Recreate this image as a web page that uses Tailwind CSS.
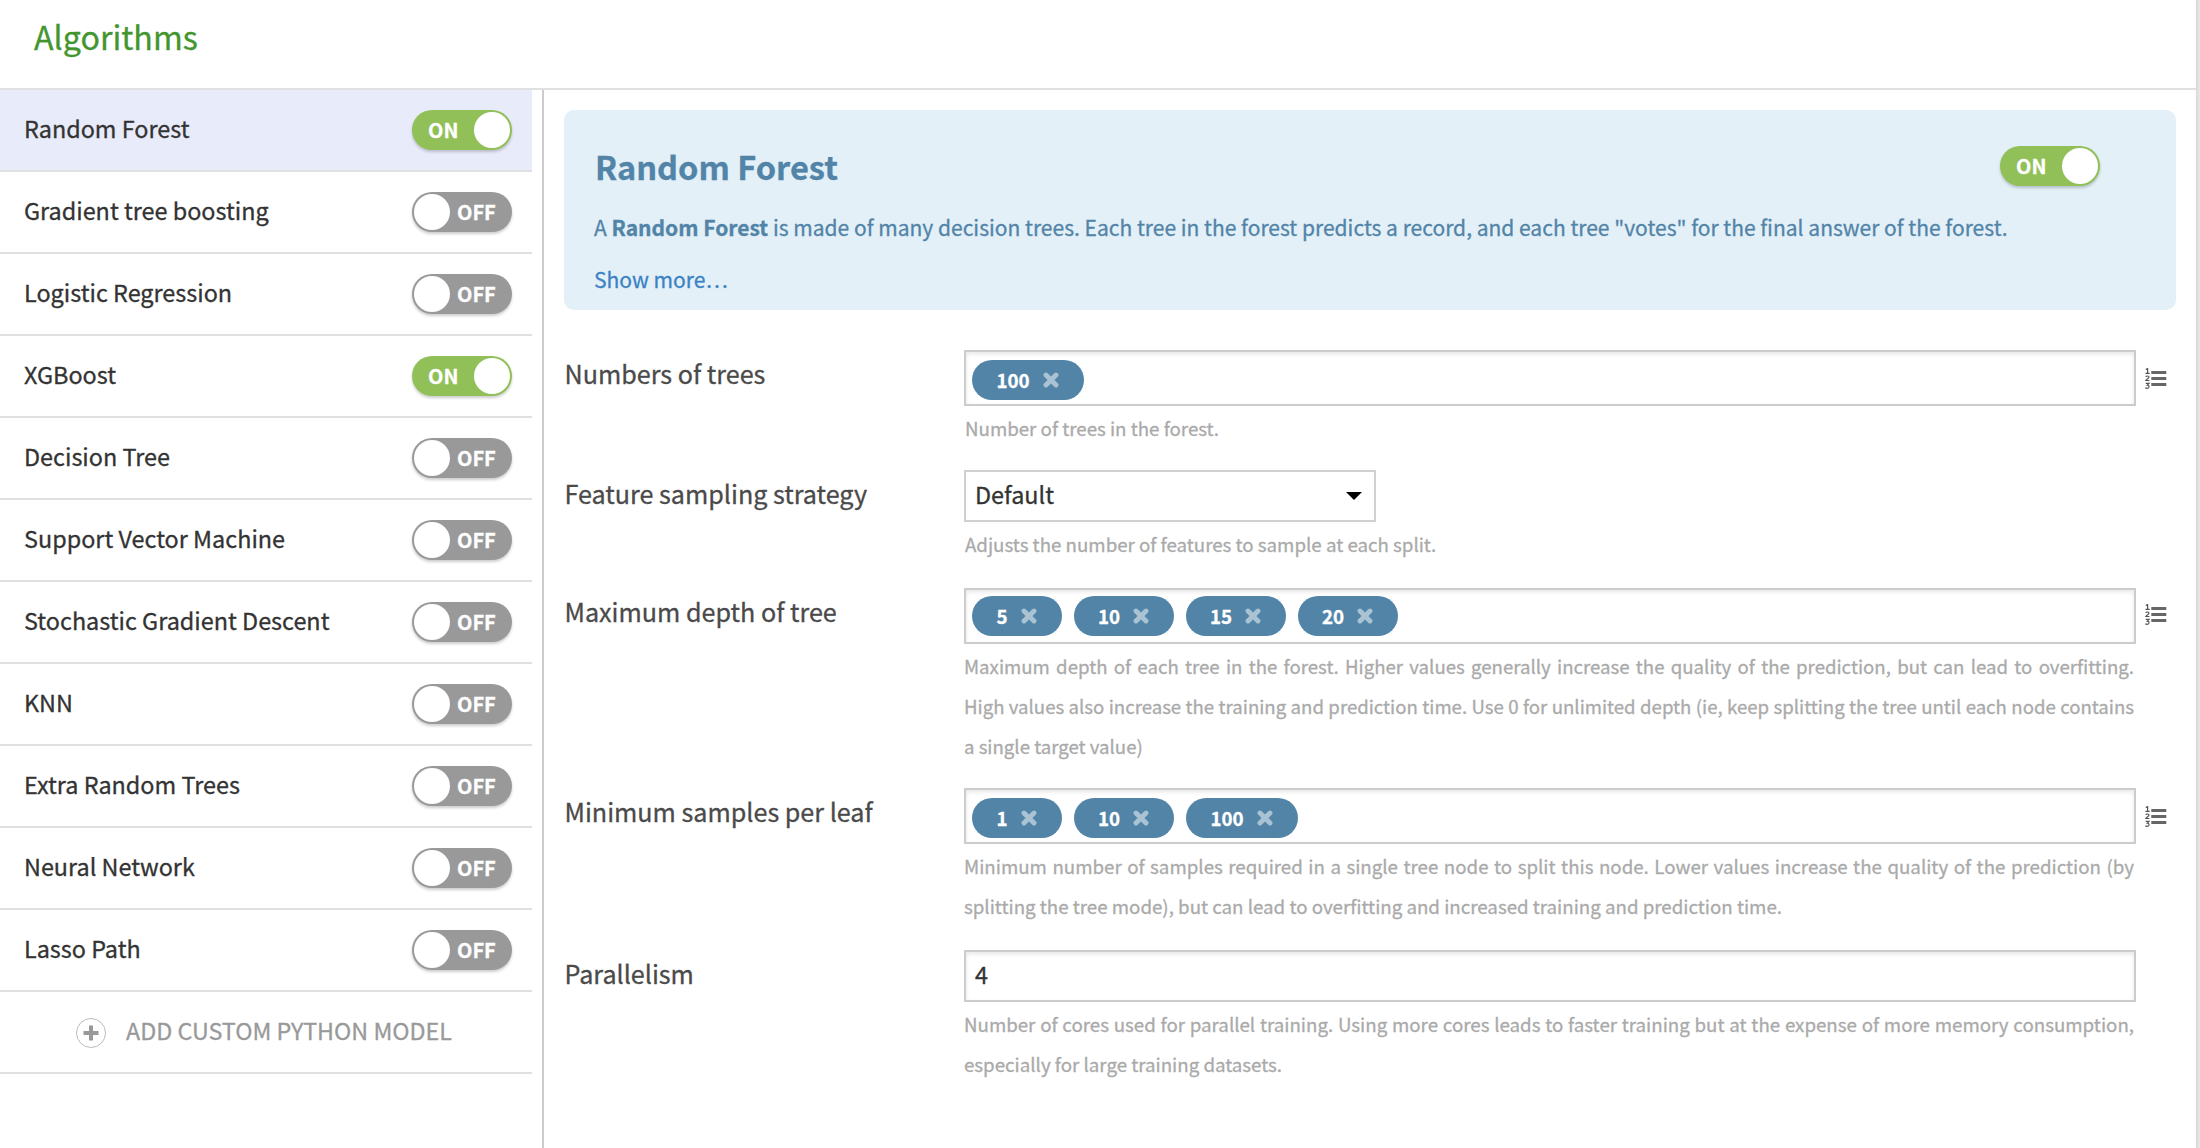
<!DOCTYPE html>
<html lang="en">
<head>
<meta charset="utf-8">
<title>Algorithms</title>
<script src="https://cdn.jsdelivr.net/npm/@tailwindcss/browser@4"></script>
</head>
<body class="flex h-[1148px] w-[2200px] overflow-hidden bg-white font-['Noto_Sans_CJK_SC','Source_Sans_Pro',sans-serif] text-[#333] [-webkit-text-stroke:0.3px]">

<svg class="hidden">
  <symbol id="cross" viewBox="0 0 16 16"><path d="M3 3l10 10M13 3L3 13" fill="none" stroke="currentColor" stroke-width="4.9" stroke-linecap="round"/></symbol>
  <symbol id="list-ol" viewBox="0 0 22 22">
    <path d="M6.3 3h15v3h-15zM6.3 9h15v3h-15zM6.3 15h15v3h-15z" fill="#666"/>
    <path d="M.8 1.500L2.600.6v4.600M.5 5.400h4.200M.8 8.900c.3-1.200 3.200-1.300 3.200.2 0 1.300-2 1.700-3.200 3.400h3.600M.8 15.400h3.200l-1.700 1.800c2.500 0 2.300 3.100-.2 3.100-.8 0-1.300-.2-1.700-.6" fill="none" stroke="#555" stroke-width="1.200"/>
  </symbol>
</svg>

<div class="flex min-w-0 flex-1 flex-col">
  <header class="h-[90px] border-b-2 border-[#e0e0e0] pl-[34px]">
    <h1 class="text-[32.200px] leading-[72px] text-[#43962f]">Algorithms</h1>
  </header>

  <div class="flex flex-1">
    <aside class="w-[532px] shrink-0" id="algorithms"></aside>

    <main class="ml-[10px] flex-1 border-l-2 border-[#ccc] pt-5 pr-5 pl-5">
      <section class="flex h-[200px] justify-between rounded-[10px] bg-[#e3f0f8] pt-9 pr-[76px] pl-[30px] text-[#5284a8]">
        <div class="w-0 whitespace-nowrap">
          <h2 class="pl-px text-[32.600px] leading-[39px] font-bold">Random Forest</h2>
          <p class="mt-[22px] text-[21.030px] leading-10">A <b class="font-bold">Random Forest</b> is made of many decision trees. Each tree in the forest predicts a record, and each tree "votes" for the final answer of the forest.</p>
          <a class="mt-3 block text-[21.050px] leading-10 text-[#3b82c4]">Show more…</a>
        </div>
        <div class="flex h-10 w-[100px] shrink-0 items-center justify-between rounded-full bg-[#91c058] pr-0.5 pl-4 shadow-[0_2px_3px_rgba(0,0,0,0.2)]">
          <span class="text-xl leading-10 font-bold text-white">ON</span><span class="size-9 rounded-full bg-white"></span>
        </div>
      </section>

      <div class="mt-10 grid grid-cols-[400px_1172px_1fr] text-[18.720px] leading-10 text-[#aaa]">
        <label class="pl-[0.5px] text-[25.150px] leading-[46px] text-[#4a4a4a]">Numbers of trees</label>
        <div class="mb-[22px]">
          <div class="flex h-14 items-start gap-3 border-2 border-[#ccc] px-1.5 pt-2 shadow-[inset_0_2px_4px_rgba(0,0,0,0.1)]">
            <span class="flex h-10 w-28 items-center justify-center gap-[13px] rounded-full bg-[#5284a8] pr-px font-bold text-white">100<svg class="size-4 text-white/50"><use href="#cross"/></svg></span>
          </div>
          <p class="mt-0.5 pl-px">Number of trees in the forest.</p>
        </div>
        <svg class="mt-[18px] ml-[9px] size-[22px]"><use href="#list-ol"/></svg>

        <label class="pl-[0.5px] text-[25.150px] leading-[46px] text-[#4a4a4a]">Feature sampling strategy</label>
        <div class="mb-6">
          <div class="flex h-[52px] w-[412px] items-center justify-between border-2 border-[#d0d0d0] pr-3 pl-[9px]">
            <span class="pb-[5px] text-[23.400px] text-[#333]">Default</span>
            <svg class="h-2 w-4" viewBox="0 0 16 8"><path d="M0 0h16L8 8z"/></svg>
          </div>
          <p class="mt-0.5 pl-px">Adjusts the number of features to sample at each split.</p>
        </div>
        <span></span>

        <label class="pl-[0.5px] text-[25.150px] leading-[46px] text-[#4a4a4a]">Maximum depth of tree</label>
        <div class="mb-[22px]">
          <div class="flex h-14 items-start gap-3 border-2 border-[#ccc] px-1.5 pt-1.5 shadow-[inset_0_2px_4px_rgba(0,0,0,0.1)]">
            <span class="flex h-10 w-[90px] items-center justify-center gap-[13px] rounded-full bg-[#5284a8] pr-px font-bold text-white">5<svg class="size-4 text-white/50"><use href="#cross"/></svg></span>
            <span class="flex h-10 w-[100px] items-center justify-center gap-[13px] rounded-full bg-[#5284a8] pr-px font-bold text-white">10<svg class="size-4 text-white/50"><use href="#cross"/></svg></span>
            <span class="flex h-10 w-[100px] items-center justify-center gap-[13px] rounded-full bg-[#5284a8] pr-px font-bold text-white">15<svg class="size-4 text-white/50"><use href="#cross"/></svg></span>
            <span class="flex h-10 w-[100px] items-center justify-center gap-[13px] rounded-full bg-[#5284a8] pr-px font-bold text-white">20<svg class="size-4 text-white/50"><use href="#cross"/></svg></span>
          </div>
          <p class="mt-0.5 pr-0.5 text-[18.640px]">
            <span class="block text-justify [text-align-last:justify]">Maximum depth of each tree in the forest. Higher values generally increase the quality of the prediction, but can lead to overfitting.</span>
            <span class="block text-justify text-[18.600px] whitespace-nowrap [text-align-last:justify]">High values also increase the training and prediction time. Use 0 for unlimited depth (ie, keep splitting the tree until each node contains</span>
            <span class="block">a single target value)</span>
          </p>
        </div>
        <svg class="mt-4 ml-[9px] size-[22px]"><use href="#list-ol"/></svg>

        <label class="pl-[0.5px] text-[25.150px] leading-[46px] text-[#4a4a4a]">Minimum samples per leaf</label>
        <div class="mb-6">
          <div class="flex h-14 items-start gap-3 border-2 border-[#ccc] px-1.5 pt-2 shadow-[inset_0_2px_4px_rgba(0,0,0,0.1)]">
            <span class="flex h-10 w-[90px] items-center justify-center gap-[13px] rounded-full bg-[#5284a8] pr-px font-bold text-white">1<svg class="size-4 text-white/50"><use href="#cross"/></svg></span>
            <span class="flex h-10 w-[100px] items-center justify-center gap-[13px] rounded-full bg-[#5284a8] pr-px font-bold text-white">10<svg class="size-4 text-white/50"><use href="#cross"/></svg></span>
            <span class="flex h-10 w-28 items-center justify-center gap-[13px] rounded-full bg-[#5284a8] pr-px font-bold text-white">100<svg class="size-4 text-white/50"><use href="#cross"/></svg></span>
          </div>
          <p class="mt-0.5 pr-0.5 text-justify">Minimum number of samples required in a single tree node to split this node. Lower values increase the quality of the prediction (by splitting the tree mode), but can lead to overfitting and increased training and prediction time.</p>
        </div>
        <svg class="mt-[18px] ml-[9px] size-[22px]"><use href="#list-ol"/></svg>

        <label class="pl-[0.5px] text-[25.150px] leading-[46px] text-[#4a4a4a]">Parallelism</label>
        <div>
          <div class="flex h-[52px] items-center border-2 border-[#ccc] px-[9px] pb-[5px] text-[23.400px] text-[#333] shadow-[inset_0_2px_4px_rgba(0,0,0,0.1)]">4</div>
          <p class="mt-0.5 pr-0.5 text-justify">Number of cores used for parallel training. Using more cores leads to faster training but at the expense of more memory consumption, especially for large training datasets.</p>
        </div>
      </div>
    </main>
  </div>
</div>
<div class="w-1 shrink-0 bg-linear-to-r from-[#d8d8d8] to-[#e8e8e8]"></div>

<script>
const algorithms = [
  ['Random Forest', true], ['Gradient tree boosting', false], ['Logistic Regression', false],
  ['XGBoost', true], ['Decision Tree', false], ['Support Vector Machine', false],
  ['Stochastic Gradient Descent', false], ['KNN', false], ['Extra Random Trees', false],
  ['Neural Network', false], ['Lasso Path', false],
];
const on = `<span class="flex h-10 w-[100px] items-center justify-between rounded-full bg-[#91c058] pr-0.5 pl-4 shadow-[0_2px_3px_rgba(0,0,0,0.2)]">
  <span class="text-xl leading-10 font-bold text-white">ON</span><span class="size-9 rounded-full bg-white"></span></span>`;
const off = `<span class="flex h-10 w-[100px] items-center gap-[7px] rounded-full bg-[#999] pl-0.5 shadow-[0_2px_3px_rgba(0,0,0,0.2)]">
  <span class="size-9 rounded-full bg-white"></span><span class="text-xl leading-10 font-bold text-white">OFF</span></span>`;
const rows = algorithms.map(([name, enabled], i) =>
  `<div class="flex h-[82px] items-center justify-between border-b-2 border-[#e0e0e0] pr-5 pl-6 ${i === 0 ? 'bg-[#e8ebfa]' : ''}">
    <span class="pb-[5px] text-[23.400px] leading-10">${name}</span>${enabled ? on : off}
  </div>`);
rows.push(`<div class="flex h-[82px] items-center border-b-2 border-[#e0e0e0] pl-[76px] text-[#999]">
    <svg class="mt-0.5 size-[30px]" viewBox="0 0 30 30" fill="none"><circle cx="15" cy="15" r="14.500" stroke="#bbb"/><path d="M7.500 15h15M15 7.500v15" stroke="#999" stroke-width="4"/></svg>
    <span class="ml-5 pb-[5px] text-[23.300px] leading-10">ADD CUSTOM PYTHON MODEL</span>
  </div>`);
document.getElementById('algorithms').innerHTML = rows.join('');
</script>
</body>
</html>
